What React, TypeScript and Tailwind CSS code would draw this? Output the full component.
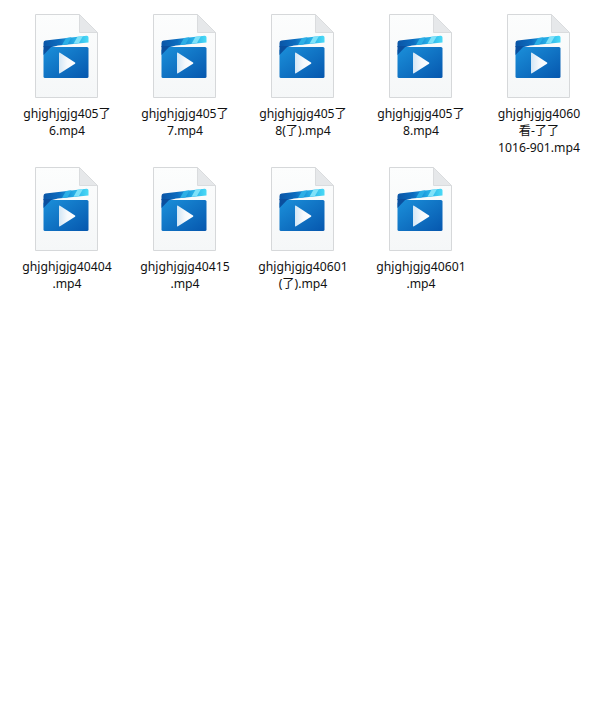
import React from 'react';

const files: { lines: string[] }[] = [
  { lines: ['ghjghjgjg405了', '6.mp4'] },
  { lines: ['ghjghjgjg405了', '7.mp4'] },
  { lines: ['ghjghjgjg405了', '8(了).mp4'] },
  { lines: ['ghjghjgjg405了', '8.mp4'] },
  { lines: ['ghjghjgjg4060', '看-了了', '1016-901.mp4'] },
  { lines: ['ghjghjgjg40404', '.mp4'] },
  { lines: ['ghjghjgjg40415', '.mp4'] },
  { lines: ['ghjghjgjg40601', '(了).mp4'] },
  { lines: ['ghjghjgjg40601', '.mp4'] },
];

const VideoFileIcon: React.FC<{ id: number }> = ({ id }) => {
  return (
    <svg width="64" height="84" viewBox="0 0 64 84" className="block">
      <defs>
        <linearGradient id={`page${id}`} x1="0" y1="0" x2="0" y2="1">
          <stop offset="0" stopColor="#fcfdfd" />
          <stop offset="1" stopColor="#f5f7f8" />
        </linearGradient>
        <linearGradient id={`body${id}`} x1="0" y1="0" x2="1" y2="1">
          <stop offset="0" stopColor="#1b90da" />
          <stop offset="1" stopColor="#0657ae" />
        </linearGradient>
        <linearGradient id={`strip${id}`} x1="0" y1="0" x2="1" y2="0">
          <stop offset="0" stopColor="#0a55a6" />
          <stop offset="0.35" stopColor="#0c6cbf" />
          <stop offset="0.65" stopColor="#22a8e4" />
          <stop offset="1" stopColor="#4adaf6" />
        </linearGradient>
        <linearGradient id={`play${id}`} x1="0" y1="0" x2="1" y2="0">
          <stop offset="0" stopColor="#d3e6f5" />
          <stop offset="0.5" stopColor="#f6f9fc" />
          <stop offset="1" stopColor="#ffffff" />
        </linearGradient>
      </defs>
      <path d="M1.5 0.5H45.5L63.5 18.5V83.5H1.5Z" fill={`url(#page${id})`} stroke="#d6d8da" />
      <path d="M45.5 0.5V18.5H63.5Z" fill="#e6e8ea" stroke="#dadcde" />
      <path d="M9.5 29Q9.5 27 11.5 26.6L52.5 21.8Q54.5 21.6 54.5 23.5V28.5L24 31.5L18 33H9.5Z" fill={`url(#strip${id})`} />
      <path d="M32 24L37.5 23.3L33.5 30.4L28 31Z" fill="#2cafe6" />
      <path d="M43.5 22.7L49 22.1L45 29.1L39.5 29.7Z" fill="#7fe2f9" />
      <path d="M12 33H53Q54.5 33 54.5 34.5V62.5Q54.5 64 53 64H11Q9.5 64 9.5 62.5V36Z" fill={`url(#body${id})`} />
      <path d="M9.5 32H18L9.5 41Z" fill="#0a4f9e" />
      <path d="M25 39.3Q25 38.2 26 38.8L41 48.6Q41.8 49.2 41 49.8L26 59.2Q25 59.8 25 58.7Z" fill={`url(#play${id})`} />
    </svg>
  );
};

const App: React.FC = () => {
  return (
    <div className="min-h-[706px] w-[604px] bg-white pl-[7px] pt-[14px]">
      <div className="grid grid-cols-[repeat(5,118px)] auto-rows-[153px]">
        {files.map((f, i) => (
          <div key={i} className="flex flex-col items-center">
            <VideoFileIcon id={i} />
            <div className="mt-[7px] pl-[2px] text-center text-[12.2px] leading-[17px] text-[#111111] font-['Noto_Sans','Noto_Sans_CJK_SC',sans-serif]">
              {f.lines.map((line, j) => (
                <div key={j} className="whitespace-nowrap">
                  {line}
                </div>
              ))}
            </div>
          </div>
        ))}
      </div>
    </div>
  );
};

export default App;
